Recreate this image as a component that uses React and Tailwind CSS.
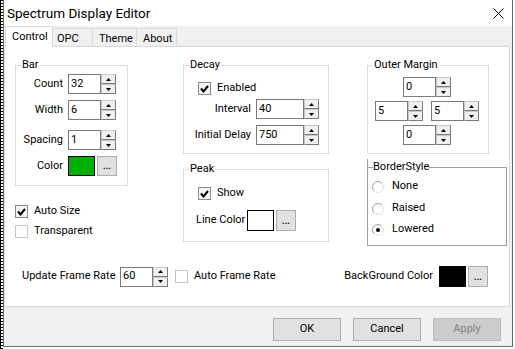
import React from 'react';

const Arrow = ({ down }) => (
  <svg width="5" height="3" viewBox="0 0 5 3">
    <polygon points={down ? '0,0 5,0 2.5,3' : '2.5,0 5,3 0,3'} fill="#000" />
  </svg>
);

const Spin = ({ value, w = 'w-[33px]' }) => (
  <div className="flex h-[20px]">
    <div className={`${w} h-full border border-[#7a7a7a] bg-white pl-[2px] flex items-center`}>{value}</div>
    <div className="flex flex-col w-[15px] h-full">
      <div className="h-[10px] border border-[#c8c8c8] border-r-[#7a7a7a] border-b-[#7a7a7a] bg-[#f0f0f0] flex items-center justify-center">
        <Arrow />
      </div>
      <div className="h-[10px] border border-[#c8c8c8] border-r-[#7a7a7a] border-b-[#7a7a7a] bg-[#f0f0f0] flex items-center justify-center">
        <Arrow down />
      </div>
    </div>
  </div>
);

const Check = ({ checked }) => (
  <span
    className={`w-[13px] h-[13px] shrink-0 border ${checked ? 'border-[#8a8a8a] bg-[#f4f4f4]' : 'border-[#c4c4c4] bg-white'} flex items-center justify-center`}
  >
    {checked && (
      <svg width="9" height="8" viewBox="0 0 9 8">
        <path d="M1 3.5 L3.5 6.5 L8 1" stroke="#000" strokeWidth="2" fill="none" />
      </svg>
    )}
  </span>
);

const CheckRow = ({ checked, label, className = '' }) => (
  <div className={`flex items-center h-[13px] ${className}`}>
    <Check checked={checked} />
    <span className="ml-[6px]">{label}</span>
  </div>
);

const Radio = ({ on, label, className = '' }) => (
  <div className={`flex items-center h-[13px] pl-[4px] ${className}`}>
    <svg width="12" height="12" viewBox="0 0 12 12">
      <circle cx="6" cy="6" r="5.5" fill="#fff" stroke="#e2e2e2" />
      <path d="M2.1 9.9 A5.5 5.5 0 0 1 9.9 2.1" stroke="#a8a8a8" fill="none" />
      {on && <circle cx="6" cy="6" r="2" fill="#000" />}
    </svg>
    <span className="ml-[8px]">{label}</span>
  </div>
);

const Swatch = ({ color, h = 'h-[20px]' }) => (
  <div className="flex">
    <div className={`w-[27px] ${h} border border-black ${color}`} />
    <div className={`ml-[2px] w-[20px] ${h} border border-[#adadad] bg-[#e1e1e1] flex items-end justify-center pb-[4px] text-[9px] font-bold leading-none`}>
      ...
    </div>
  </div>
);

const Group = ({ label, className = '', classic, children }) => (
  <div className={`relative border ${classic ? 'border-[#a0a0a0]' : 'border-[#dcdcdc]'} ${className}`}>
    {classic && <span className="absolute left-[-1px] top-[-9px] h-[8px] w-px bg-[#a0a0a0]" />}
    <span className={`absolute top-[-8px] leading-[14px] bg-white ${classic ? 'left-[5px]' : 'left-[5px] px-[1px]'}`}>{label}</span>
    {children}
  </div>
);

const Field = ({ label, w, children, className = '' }) => (
  <div className={`flex items-center ${className}`}>
    <span className={`${w} text-right mr-[5px]`}>{label}</span>
    {children}
  </div>
);

export default function App() {
  return (
    <div className="w-[515px] h-[349px] bg-white flex font-['Roboto','Liberation_Sans',sans-serif] text-[11px] text-black overflow-hidden">
      <div className="w-[3px] h-full border-l border-black bg-[repeating-linear-gradient(to_bottom,#000_0px,#000_1px,#fff_1px,#fff_3px)]" />
      <div className="w-[510px] h-[347px] border-l border-r border-b border-[#6b6b6b] flex flex-col bg-[#f0f0f0]">
        {/* title bar */}
        <div className="h-[26px] bg-white flex items-center justify-between pl-[3px] pr-[8px]">
          <span className="text-[13.5px]">Spectrum Display Editor</span>
          <svg width="11" height="11" viewBox="0 0 11 11">
            <path d="M0.5 0.5 L10.5 10.5 M10.5 0.5 L0.5 10.5" stroke="#000" strokeWidth="1" />
          </svg>
        </div>

        {/* tabs */}
        <div className="h-[20px] flex items-end pl-[1px]">
          <div className="relative z-10 h-[21px] -mb-px w-[48px] bg-white border border-b-0 border-[#d9d9d9] pl-[6px] pt-[2px]">Control</div>
          <div className="h-[18px] w-[40px] border-t border-r border-[#d9d9d9] pl-[4px] pt-[2px]">OPC</div>
          <div className="h-[18px] w-[44px] border-t border-r border-[#d9d9d9] pl-[6px] pt-[2px]">Theme</div>
          <div className="h-[18px] w-[40px] border-t border-r border-[#d9d9d9] pl-[6px] pt-[2px]">About</div>
        </div>

        {/* panel */}
        <div className="h-[261px] mr-[2px] border border-[#d9d9d9] bg-white flex flex-col">
          <div className="flex items-start pt-[18px] pl-[10px]">
            <div className="w-[113px] flex flex-col">
              <Group label="Bar" className="h-[121px] flex flex-col">
                <Field label="Count" w="w-[47px]" className="mt-[8px]"><Spin value="32" /></Field>
                <Field label="Width" w="w-[47px]" className="mt-[6px]"><Spin value="6" /></Field>
                <Field label="Spacing" w="w-[47px]" className="mt-[10px]"><Spin value="1" /></Field>
                <Field label="Color" w="w-[47px]" className="mt-[6px]"><Swatch color="bg-[#00b000]" /></Field>
              </Group>
              <CheckRow checked label="Auto Size" className="mt-[19px]" />
              <CheckRow label="Transparent" className="mt-[7px]" />
            </div>

            <div className="ml-[55px] w-[146px] flex flex-col">
              <Group label="Decay" className="h-[89px] flex flex-col">
                <CheckRow checked label="Enabled" className="mt-[16px] pl-[14px]" />
                <Field label="Interval" w="w-[67px]" className="mt-[4px]"><Spin value="40" w="w-[48px]" /></Field>
                <Field label="Initial Delay" w="w-[67px]" className="mt-[6px]"><Spin value="750" w="w-[48px]" /></Field>
              </Group>
              <Group label="Peak" className="mt-[15px] h-[73px] flex flex-col">
                <CheckRow checked label="Show" className="mt-[17px] pl-[14px]" />
                <div className="mt-[10px] flex items-center pl-[12px]">
                  <span className="w-[51px]">Line Color</span>
                  <Swatch color="bg-white" h="h-[21px]" />
                </div>
              </Group>
            </div>

            <div className="ml-[38px] w-[140px] flex flex-col">
              <Group label="Outer Margin" className="w-[122px] h-[89px] flex flex-col">
                <div className="mt-[11px] ml-[35px]"><Spin value="0" /></div>
                <div className="mt-[4px] ml-[7px] flex gap-[8px]">
                  <Spin value="5" />
                  <Spin value="5" />
                </div>
                <div className="mt-[4px] ml-[35px]"><Spin value="0" /></div>
              </Group>
              <Group classic label="BorderStyle" className="mt-[13px] h-[79px] flex flex-col">
                <Radio label="None" className="mt-[12px]" />
                <Radio label="Raised" className="mt-[9px]" />
                <Radio on label="Lowered" className="mt-[8px]" />
              </Group>
            </div>
          </div>

          <div className="mt-[20px] h-[21px] flex items-center pl-[17px] pr-[21px]">
            <span className="w-[98px]">Update Frame Rate</span>
            <Spin value="60" />
            <div className="ml-[7px]"><CheckRow label="Auto Frame Rate" /></div>
            <span className="ml-auto mr-[6px]">BackGround Color</span>
            <Swatch color="bg-black" h="h-[21px]" />
          </div>
        </div>

        {/* buttons */}
        <div className="h-[39px] flex justify-end items-start pt-[11px] pr-[11px] gap-[12px]">
          <button className="w-[68px] h-[23px] border border-[#adadad] bg-[#e1e1e1]">OK</button>
          <button className="w-[68px] h-[23px] border border-[#adadad] bg-[#e1e1e1]">Cancel</button>
          <button className="w-[68px] h-[23px] border border-[#bfbfbf] bg-[#cccccc] text-[#838383]">Apply</button>
        </div>
      </div>
    </div>
  );
}
